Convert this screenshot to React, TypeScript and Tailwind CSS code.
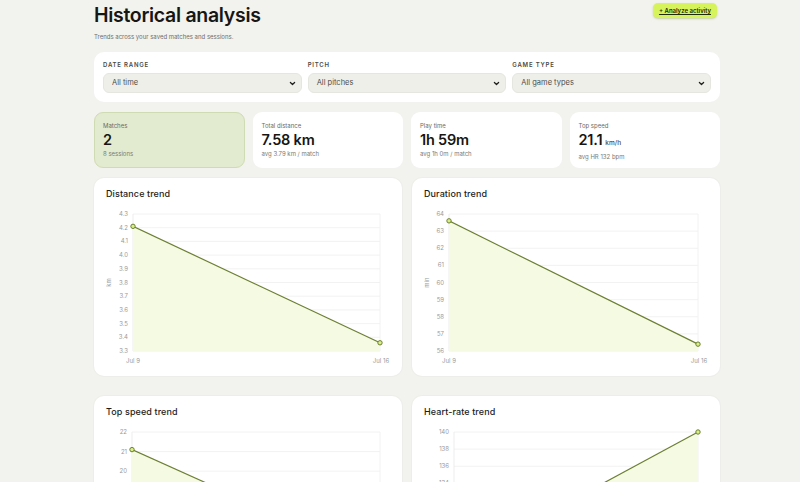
import React from 'react';

const FONT = "font-['Inter','Liberation_Sans',sans-serif]";

type TrendProps = {
  title: string;
  unit: string;
  min: number;
  max: number;
  step: number;
  decimals: number;
  values: [number, number];
  plotLeft: number;
};

const PLOT_RIGHT = 274;
const PLOT_TOP = 10;
const PLOT_BOTTOM = 147;

const TrendChart: React.FC<TrendProps> = ({ title, unit, min, max, step, decimals, values, plotLeft }) => {
  const ticks: number[] = [];
  const count = Math.round((max - min) / step);
  for (let i = 0; i <= count; i++) ticks.push(min + i * step);

  const y = (v: number) => PLOT_BOTTOM - ((v - min) / (max - min)) * (PLOT_BOTTOM - PLOT_TOP);
  const x0 = plotLeft;
  const x1 = PLOT_RIGHT;
  const y0 = y(values[0]);
  const y1 = y(values[1]);
  const clipId = `clip-${title.replace(/\s/g, '-')}`;

  return (
    <div className="bg-white rounded-[10px] pt-[11px] pb-[10px] px-3 shadow-[0_0_0_1px_rgba(0,0,0,0.02)]">
      <h3 className="text-[9px] leading-[10px] font-medium text-[#1d1d1b] tracking-[0.1px]">{title}</h3>
      <svg width="284" height="162" className="mt-[5px] block overflow-hidden">
        <defs>
          <clipPath id={clipId}>
            <rect x={plotLeft} y={PLOT_TOP - 4} width={PLOT_RIGHT - plotLeft + 4} height={PLOT_BOTTOM - PLOT_TOP + 4} />
          </clipPath>
        </defs>
        {ticks.map((t) => (
          <g key={t}>
            <line x1={plotLeft} x2={PLOT_RIGHT} y1={y(t)} y2={y(t)} stroke="#efefef" strokeWidth="0.8" />
            <text x={plotLeft - 5} y={y(t) + 2} textAnchor="end" fontSize="6" fill="#9a9a9a" fontFamily="Inter, sans-serif">
              {t.toFixed(decimals)}
            </text>
          </g>
        ))}
        <line x1={plotLeft} x2={plotLeft} y1={PLOT_TOP} y2={PLOT_BOTTOM} stroke="#e9e9e9" strokeWidth="0.8" />
        <line x1={PLOT_RIGHT} x2={PLOT_RIGHT} y1={PLOT_TOP} y2={PLOT_BOTTOM} stroke="#efefef" strokeWidth="0.8" />
        <text
          x={5}
          y={(PLOT_TOP + PLOT_BOTTOM) / 2}
          fontSize="6"
          fill="#9a9a9a"
          textAnchor="middle"
          fontFamily="Inter, sans-serif"
          transform={`rotate(-90 5 ${(PLOT_TOP + PLOT_BOTTOM) / 2})`}
        >
          {unit}
        </text>
        <g clipPath={`url(#${clipId})`}>
          <polygon points={`${x0},${PLOT_BOTTOM} ${x0},${y0} ${x1},${y1} ${x1},${PLOT_BOTTOM}`} fill="#f5fbe3" />
          <line x1={x0} y1={y0} x2={x1} y2={y1} stroke="#6c7f33" strokeWidth="1.2" />
        </g>
        <circle cx={x0} cy={y0} r="2.2" fill="#d8ef86" stroke="#6c7f33" strokeWidth="1" />
        <circle cx={x1} cy={y1} r="2.2" fill="#d8ef86" stroke="#6c7f33" strokeWidth="1" />
        <text x={x0} y={159} textAnchor="middle" fontSize="6" fill="#9a9a9a" fontFamily="Inter, sans-serif">Jul 9</text>
        <text x={x1 + 1} y={159} textAnchor="middle" fontSize="6" fill="#9a9a9a" fontFamily="Inter, sans-serif">Jul 16</text>
      </svg>
    </div>
  );
};

const FilterSelect: React.FC<{ label: string; value: string }> = ({ label, value }) => (
  <div>
    <div className="text-[6px] leading-[8px] font-semibold uppercase tracking-[0.8px] text-[#4a4a46]">{label}</div>
    <div className="mt-1 h-5 rounded-[6px] bg-[#efefea] border border-[#e6e6e0] flex items-center justify-between pl-2 pr-[5px]">
      <span className="text-[7.5px] text-[#4d4d49]">{value}</span>
      <svg width="7" height="7" viewBox="0 0 10 10">
        <path d="M2 3.5 L5 6.5 L8 3.5" fill="none" stroke="#1f1f1d" strokeWidth="1.8" strokeLinecap="round" strokeLinejoin="round" />
      </svg>
    </div>
  </div>
);

const StatCard: React.FC<{ label: string; value: string; unit?: string; sub: string; active?: boolean }> = ({ label, value, unit, sub, active }) => (
  <div
    className={
      active
        ? 'h-14 rounded-[9px] bg-[#e2eacf] border border-[#cfdcb3] pt-[9px] pl-[8px]'
        : 'h-14 rounded-[9px] bg-white pt-[10px] pl-[9px]'
    }
  >
    <div className="text-[6px] leading-[8px] text-[#6b6b66]">{label}</div>
    <div className="mt-[1px] leading-[18px] text-[#161614] flex items-baseline">
      <span className="text-[14.5px] font-semibold tracking-[-0.2px]">{value}</span>
      {unit && <span className="ml-[3px] text-[6.5px] text-[#4a4a46] font-medium">{unit}</span>}
    </div>
    <div className="mt-[1px] text-[6px] leading-[8px] text-[#7a7a74]">{sub}</div>
  </div>
);

export default function App() {
  return (
    <div className={`min-h-screen bg-[#f2f2ee] ${FONT}`}>
      <div className="w-[626px] ml-[94px]">
        <header className="flex justify-between items-start">
          <div>
            <h1 className="mt-1 text-[19.5px] leading-[22px] font-semibold tracking-[-0.3px] text-[#161614]">Historical analysis</h1>
            <p className="mt-[6px] text-[6px] leading-[10px] text-[#6f6f6a]">Trends across your saved matches and sessions.</p>
          </div>
          <button className="mt-[3px] mr-[3px] h-[15px] px-[6px] rounded-[5px] bg-[#d6f35c] shadow-[0_1px_2px_rgba(120,150,20,0.35)] text-[6px] font-semibold text-[#1f2a08] underline underline-offset-1 flex items-center">
            + Analyze activity
          </button>
        </header>

        <div className="mt-[10px] bg-white rounded-[10px] px-[9px] pt-[9px] pb-[9px] grid grid-cols-3 gap-[6px]">
          <FilterSelect label="Date range" value="All time" />
          <FilterSelect label="Pitch" value="All pitches" />
          <FilterSelect label="Game type" value="All game types" />
        </div>

        <div className="mt-[10px] grid grid-cols-4 gap-2">
          <StatCard label="Matches" value="2" sub="8 sessions" active />
          <StatCard label="Total distance" value="7.58 km" sub="avg 3.79 km / match" />
          <StatCard label="Play time" value="1h 59m" sub="avg 1h 0m / match" />
          <StatCard label="Top speed" value="21.1" unit="km/h" sub="avg HR 132 bpm" />
        </div>

        <div className="mt-[10px] grid grid-cols-2 gap-x-[10px] gap-y-5 pb-6">
          <TrendChart title="Distance trend" unit="km" min={3.3} max={4.3} step={0.1} decimals={1} values={[4.21, 3.36]} plotLeft={27} />
          <TrendChart title="Duration trend" unit="min" min={56} max={64} step={1} decimals={0} values={[63.6, 56.4]} plotLeft={25} />
          <TrendChart title="Top speed trend" unit="km/h" min={15} max={22} step={1} decimals={0} values={[21.1, 15.4]} plotLeft={26} />
          <TrendChart title="Heart-rate trend" unit="bpm" min={124} max={140} step={2} decimals={0} values={[124.6, 140]} plotLeft={30} />
        </div>
      </div>
    </div>
  );
}
